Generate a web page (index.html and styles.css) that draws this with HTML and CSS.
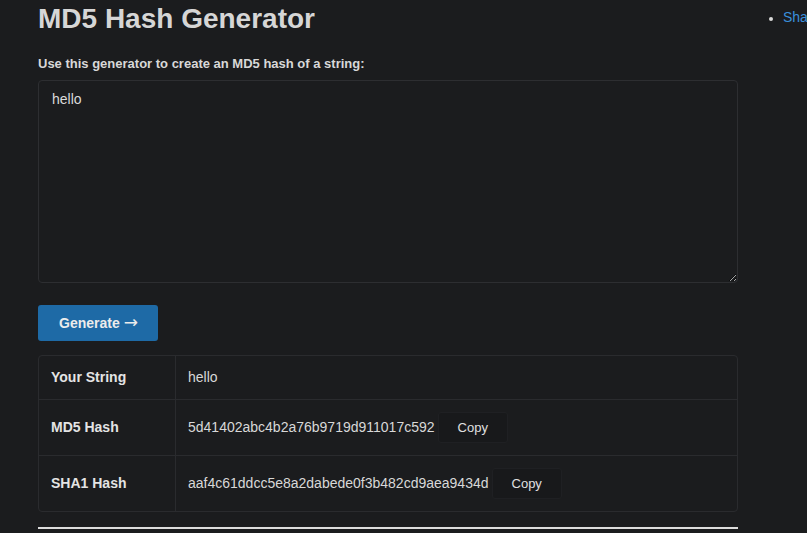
FILE: index.html
```html
<!DOCTYPE html>
<html lang="en">
<head>
<meta charset="utf-8">
<title>MD5 Hash Generator</title>
<link rel="stylesheet" href="styles.css">
</head>
<body>
<div class="page">
  <main class="main">
    <h1 class="title">MD5 Hash Generator</h1>
    <form class="form">
      <label class="label" for="input">Use this generator to create an MD5 hash of a string:</label>
      <textarea id="input" class="input">hello</textarea>
      <button type="button" class="btn">Generate <span class="arrow">→</span></button>
    </form>
    <table class="results">
      <tr>
        <th>Your String</th>
        <td>hello</td>
      </tr>
      <tr>
        <th>MD5 Hash</th>
        <td><span class="hash">5d41402abc4b2a76b9719d911017c592</span><button type="button" class="copy">Copy</button></td>
      </tr>
      <tr>
        <th>SHA1 Hash</th>
        <td><span class="hash">aaf4c61ddcc5e8a2dabede0f3b482cd9aea9434d</span><button type="button" class="copy">Copy</button></td>
      </tr>
    </table>
    <hr class="rule">
  </main>
  <aside class="side">
    <ul class="links">
      <li><a href="#">Sha1 Hash Generator</a></li>
    </ul>
  </aside>
</div>
</body>
</html>
```

FILE: styles.css
```css
html, body {
  margin: 0;
  padding: 0;
  background: #1b1c1e;
  overflow: hidden;
}
body {
  font-family: "Liberation Sans", Arial, sans-serif;
  color: #dadada;
  font-size: 14px;
}
.page {
  display: flex;
  padding-left: 38px;
  width: 900px;
}
.main {
  width: 700px;
  flex: none;
  padding-top: 2px;
}
.title {
  margin: 0;
  font-size: 28px;
  line-height: 34px;
  font-weight: bold;
  color: #d6d6d6;
}
.form {
  margin: 20px 0 0;
}
.label {
  display: block;
  font-size: 13px;
  line-height: 16px;
  font-weight: bold;
  color: #d8d8d8;
}
.input {
  display: block;
  box-sizing: border-box;
  width: 700px;
  height: 203px;
  margin: 8px 0 0;
  padding: 10px 13px;
  background: #1b1c1e;
  border: 1px solid #2d2e31;
  border-radius: 4px;
  color: #dadada;
  font-family: "Liberation Sans", Arial, sans-serif;
  font-size: 14px;
  line-height: 17px;
  resize: vertical;
  outline: none;
}
.btn {
  display: block;
  margin: 22px 0 0;
  width: 120px;
  height: 36px;
  padding: 0 0 0 1px;
  border: 0;
  border-radius: 3px;
  background: #1e6aa6;
  color: #ececec;
  font-family: "Liberation Sans", Arial, sans-serif;
  font-size: 14px;
  font-weight: bold;
}
.arrow {
  font-family: "DejaVu Sans", sans-serif;
  font-weight: normal;
  font-size: 17px;
  line-height: 14px;
}
.results {
  margin-top: 14px;
  width: 700px;
  border-collapse: separate;
  border-spacing: 0;
  border: 1px solid #2a2b2e;
  border-radius: 4px;
}
.results th,
.results td {
  padding: 12px;
  line-height: 19px;
  text-align: left;
  vertical-align: middle;
  border-top: 1px solid #2a2b2e;
  font-size: 14px;
}
.results tr:first-child th,
.results tr:first-child td {
  border-top: 0;
}
.results th {
  width: 112px;
  font-weight: bold;
  color: #e4e4e4;
  border-right: 1px solid #2a2b2e;
}
.results td {
  color: #d8d8d8;
}
.hash {
  vertical-align: middle;
}
.copy {
  display: inline-block;
  vertical-align: middle;
  margin-left: 3px;
  height: 31px;
  padding: 0 19px;
  background: #18191b;
  border: 1px solid #1f2023;
  border-radius: 3px;
  color: #e0e0e0;
  font-family: "Liberation Sans", Arial, sans-serif;
  font-size: 13px;
}
.rule {
  margin: 15px 0 0;
  height: 2px;
  border: 0;
  background: #dcdcdc;
}
.side {
  flex: none;
  width: 200px;
}
.links {
  margin: 9px 0 0;
  padding-left: 45px;
  color: #dadada;
  font-size: 14px;
  line-height: 16px;
  list-style: disc;
}
.links li::marker {
  font-size: 12px;
}
.links a {
  color: #3a8fdb;
  text-decoration: none;
}
```
